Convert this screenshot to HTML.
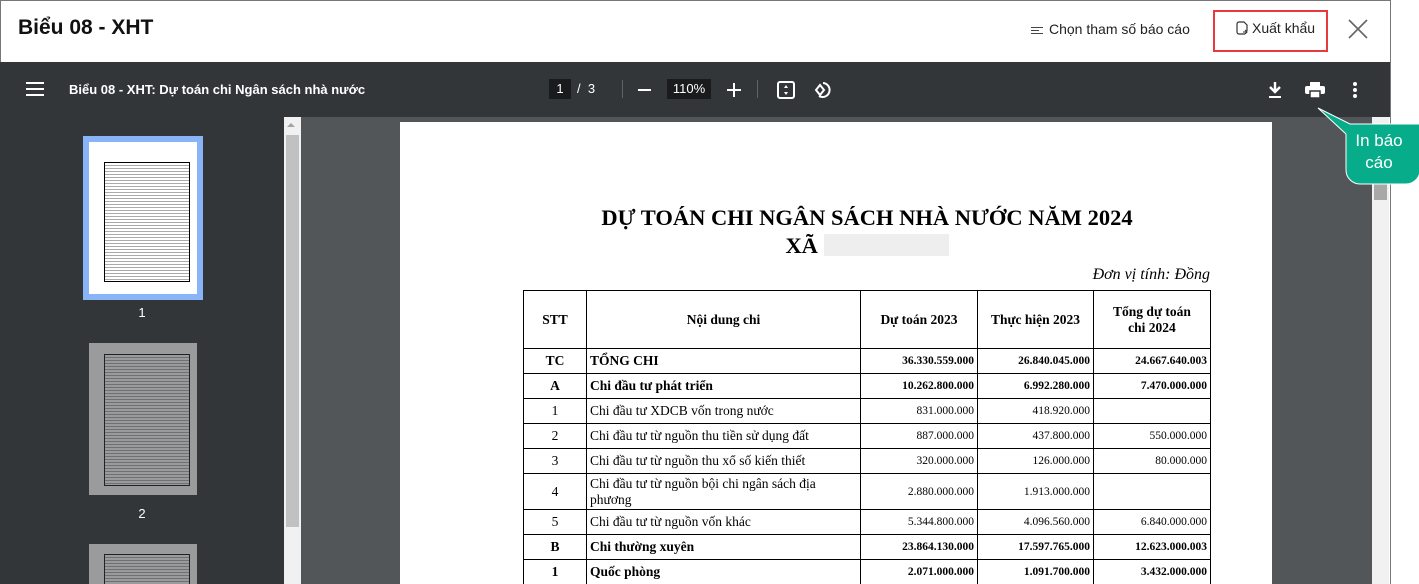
<!DOCTYPE html>
<html><head><meta charset="utf-8"><style>
*{margin:0;padding:0;box-sizing:border-box}
body{width:1419px;height:584px;overflow:hidden;background:#fff;font-family:"Liberation Sans",sans-serif;position:relative}
.frame{position:absolute;left:0;top:0;width:1390px;height:584px;outline:1px solid #777;overflow:hidden;background:#fff}
.hdr{position:absolute;left:0;top:0;width:1390px;height:62px;background:#fff;border-top:1px solid #777;border-left:1px solid #777}
.title{position:absolute;left:17px;top:15px;font-size:21px;font-weight:bold;color:#111}
.tb{position:absolute;left:0;top:62px;width:1390px;height:55px;background:#323639;color:#fff}
.side{position:absolute;left:0;top:117px;width:284px;height:467px;background:#323639}
.sb{position:absolute;left:284px;top:117px;width:17px;height:467px;background:#f1f1f1}
.main{position:absolute;left:301px;top:117px;width:1071px;height:467px;background:#525659}
.rsb{position:absolute;left:1372px;top:117px;width:17px;height:467px;background:#f1f1f1}
.page{position:absolute;left:400px;top:122px;width:872px;height:470px;background:#fff}
table{position:absolute;left:123px;top:168px;border-collapse:collapse;font-family:"Liberation Serif",serif;font-size:13.5px;color:#000}
td{border:1.5px solid #000;padding:0 3px;height:25px}
.b{font-weight:bold}
.c{text-align:center}.r{text-align:right;font-size:11.5px}
.r.b{font-size:11.5px}
</style></head><body>
<div class="frame">
<div class="hdr">
<div class="title">Biểu 08 - XHT</div>
<div style="position:absolute;left:1030px;top:20px;font-size:14px;color:#222"><span style="display:inline-block;width:12px;vertical-align:middle;margin-right:6px"><span style="display:block;border-top:1px solid #444;width:12px;margin:2px 0"></span><span style="display:block;border-top:1px solid #444;width:8px;margin:2px 0"></span><span style="display:block;border-top:1px solid #444;width:12px;margin:2px 0"></span></span>Chọn tham số báo cáo</div>
<div style="position:absolute;left:1212px;top:9px;width:115px;height:42px;border:2px solid #e8393d"></div>
<div style="position:absolute;left:1235px;top:19px;font-size:14px;color:#222"><svg width="12" height="14" viewBox="0 0 12 14" style="vertical-align:-2px;margin-right:4px"><path d="M3 1h5l3 3v6M9 13H3a2 2 0 0 1-2-2V3a2 2 0 0 1 2-2" fill="none" stroke="#333" stroke-width="1.2"/><path d="M7 11h4M9 9l2 2-2 2" fill="none" stroke="#333" stroke-width="1.1"/></svg>Xuất khẩu</div>
<svg style="position:absolute;left:1347px;top:18px" width="20" height="20"><path d="M1 1L19 19M19 1L1 19" stroke="#666" stroke-width="1.6"/></svg>
</div>
<div class="tb">
<svg style="position:absolute;left:26px;top:20px" width="18" height="14"><path d="M0 1h18M0 7h18M0 13h18" stroke="#fff" stroke-width="2"/></svg>
<div style="position:absolute;left:69px;top:20px;font-size:13px;font-weight:bold">Biểu 08 - XHT: Dự toán chi Ngân sách nhà nước</div>
<div style="position:absolute;left:549px;top:17px;width:22px;height:20px;background:#191b1c;font-size:13px;text-align:center;line-height:20px">1</div>
<div style="position:absolute;left:577px;top:19px;font-size:13px">/&nbsp; 3</div>
<div style="position:absolute;left:622px;top:18px;width:1px;height:18px;background:#5f6368"></div>
<div style="position:absolute;left:638px;top:27px;width:13px;height:2px;background:#fff"></div>
<div style="position:absolute;left:667px;top:17px;width:44px;height:20px;background:#191b1c;font-size:13px;text-align:center;line-height:20px">110%</div>
<svg style="position:absolute;left:727px;top:21px" width="14" height="14"><path d="M7 0v14M0 7h14" stroke="#fff" stroke-width="2"/></svg>
<div style="position:absolute;left:757px;top:18px;width:1px;height:18px;background:#5f6368"></div>
<svg style="position:absolute;left:777px;top:19px" width="18" height="18"><rect x="1" y="1" width="16" height="16" rx="2" fill="none" stroke="#fff" stroke-width="2"/><path d="M9 4l-2 3h4zM9 14l-2-3h4z" fill="#fff"/></svg>
<svg style="position:absolute;left:813px;top:18px" width="20" height="20"><path d="M10 3a7 7 0 1 1-4 13" fill="none" stroke="#fff" stroke-width="2"/><path d="M7 5l-4 5 4 5 4-5z" fill="none" stroke="#fff" stroke-width="2"/></svg>
<svg style="position:absolute;left:1268px;top:20px" width="14" height="16"><path d="M7 0v9M2 5l5 5 5-5" fill="none" stroke="#fff" stroke-width="2.4"/><path d="M1 15h12" stroke="#fff" stroke-width="2"/></svg>
<svg style="position:absolute;left:1305px;top:20px" width="20" height="16"><rect x="5" y="0" width="10" height="4" fill="#fff"/><rect x="0" y="4" width="20" height="8" rx="2" fill="#fff"/><rect x="5" y="9" width="10" height="7" fill="#fff" stroke="#323639" stroke-width="1.5"/></svg>
<svg style="position:absolute;left:1352px;top:20px" width="6" height="16"><circle cx="3" cy="2" r="2" fill="#fff"/><circle cx="3" cy="8" r="2" fill="#fff"/><circle cx="3" cy="14" r="2" fill="#fff"/></svg>
</div>
<div class="side">
<div style="position:absolute;left:83px;top:19px;width:120px;height:164px;background:#8ab4f8"></div>
<div style="position:absolute;left:89px;top:25px;width:108px;height:152px;background:#fff"></div>
<div style="position:absolute;left:104px;top:45px;width:86px;height:120px;border:1px solid #000;background:repeating-linear-gradient(#fff 0,#fff 2px,#555 3px)"></div>
<div style="position:absolute;left:0;top:188px;width:284px;text-align:center;color:#fff;font-size:13px">1</div>
<div style="position:absolute;left:89px;top:226px;width:108px;height:152px;background:#9a9b9d"></div>
<div style="position:absolute;left:104px;top:237px;width:86px;height:132px;border:1px solid #222;background:repeating-linear-gradient(#9a9b9d 0,#9a9b9d 2px,#444 3px)"></div>
<div style="position:absolute;left:0;top:389px;width:284px;text-align:center;color:#fff;font-size:13px">2</div>
<div style="position:absolute;left:89px;top:427px;width:108px;height:50px;background:#9a9b9d"></div>
<div style="position:absolute;left:104px;top:437px;width:86px;height:40px;border:1px solid #222;background:repeating-linear-gradient(#9a9b9d 0,#9a9b9d 2px,#444 3px)"></div>
</div>
<div class="sb"><div style="position:absolute;left:3px;top:6px;width:0;height:0;border-left:4px solid transparent;border-right:4px solid transparent;border-bottom:4px solid #a3a3a3"></div><div style="position:absolute;left:2px;top:18px;width:13px;height:392px;background:#c1c1c1"></div></div>
<div class="main"></div>
<div class="rsb"><div style="position:absolute;left:2px;top:66px;width:13px;height:17px;background:#a8a8a8"></div></div>
<div class="page">
<div style="position:absolute;left:31px;top:82px;width:872px;text-align:center;font-family:'Liberation Serif',serif;font-weight:bold;font-size:22.5px;line-height:28px">DỰ TOÁN CHI NGÂN SÁCH NHÀ NƯỚC NĂM 2024<br>XÃ <span style="display:inline-block;width:125px;height:22px;background:#eee;vertical-align:-3px"></span></div>
<div style="position:absolute;right:62px;top:144px;font-family:'Liberation Serif',serif;font-style:italic;font-size:16px">Đơn vị tính: Đồng</div>
<table>
<tr class="b" style="height:58px"><td class="c" style="width:63px">STT</td><td class="c" style="width:274px">Nội dung chi</td><td class="c" style="width:117px">Dự toán 2023</td><td class="c" style="width:116px">Thực hiện 2023</td><td class="c" style="width:117px">Tổng dự toán<br>chi 2024</td></tr>
<tr class="b"><td class="c">TC</td><td>TỔNG CHI</td><td class="r b">36.330.559.000</td><td class="r b">26.840.045.000</td><td class="r b">24.667.640.003</td></tr>
<tr class="b"><td class="c">A</td><td>Chi đầu tư phát triển</td><td class="r b">10.262.800.000</td><td class="r b">6.992.280.000</td><td class="r b">7.470.000.000</td></tr>
<tr><td class="c">1</td><td>Chi đầu tư XDCB vốn trong nước</td><td class="r">831.000.000</td><td class="r">418.920.000</td><td class="r"></td></tr>
<tr><td class="c">2</td><td>Chi đầu tư từ nguồn thu tiền sử dụng đất</td><td class="r">887.000.000</td><td class="r">437.800.000</td><td class="r">550.000.000</td></tr>
<tr><td class="c">3</td><td>Chi đầu tư từ nguồn thu xổ số kiến thiết</td><td class="r">320.000.000</td><td class="r">126.000.000</td><td class="r">80.000.000</td></tr>
<tr style="height:36px"><td class="c">4</td><td style="line-height:16px">Chi đầu tư từ nguồn bội chi ngân sách địa<br>phương</td><td class="r">2.880.000.000</td><td class="r">1.913.000.000</td><td class="r"></td></tr>
<tr><td class="c">5</td><td>Chi đầu tư từ nguồn vốn khác</td><td class="r">5.344.800.000</td><td class="r">4.096.560.000</td><td class="r">6.840.000.000</td></tr>
<tr class="b"><td class="c">B</td><td>Chi thường xuyên</td><td class="r b">23.864.130.000</td><td class="r b">17.597.765.000</td><td class="r b">12.623.000.003</td></tr>
<tr class="b"><td class="c">1</td><td>Quốc phòng</td><td class="r b">2.071.000.000</td><td class="r b">1.091.700.000</td><td class="r b">3.432.000.000</td></tr>
</table>
</div>
</div>
<svg style="position:absolute;left:1310px;top:100px" width="109" height="90"><path d="M8 8L40 24H110V70a14 14 0 0 1-14 14H50a14 14 0 0 1-14-14V34z" fill="#07ad8b" stroke="#fff" stroke-width="1"/></svg>
<div style="position:absolute;left:1347px;top:130px;width:64px;text-align:center;color:#fff;font-size:17px;line-height:22px">In báo<br>cáo</div>
</body></html>
